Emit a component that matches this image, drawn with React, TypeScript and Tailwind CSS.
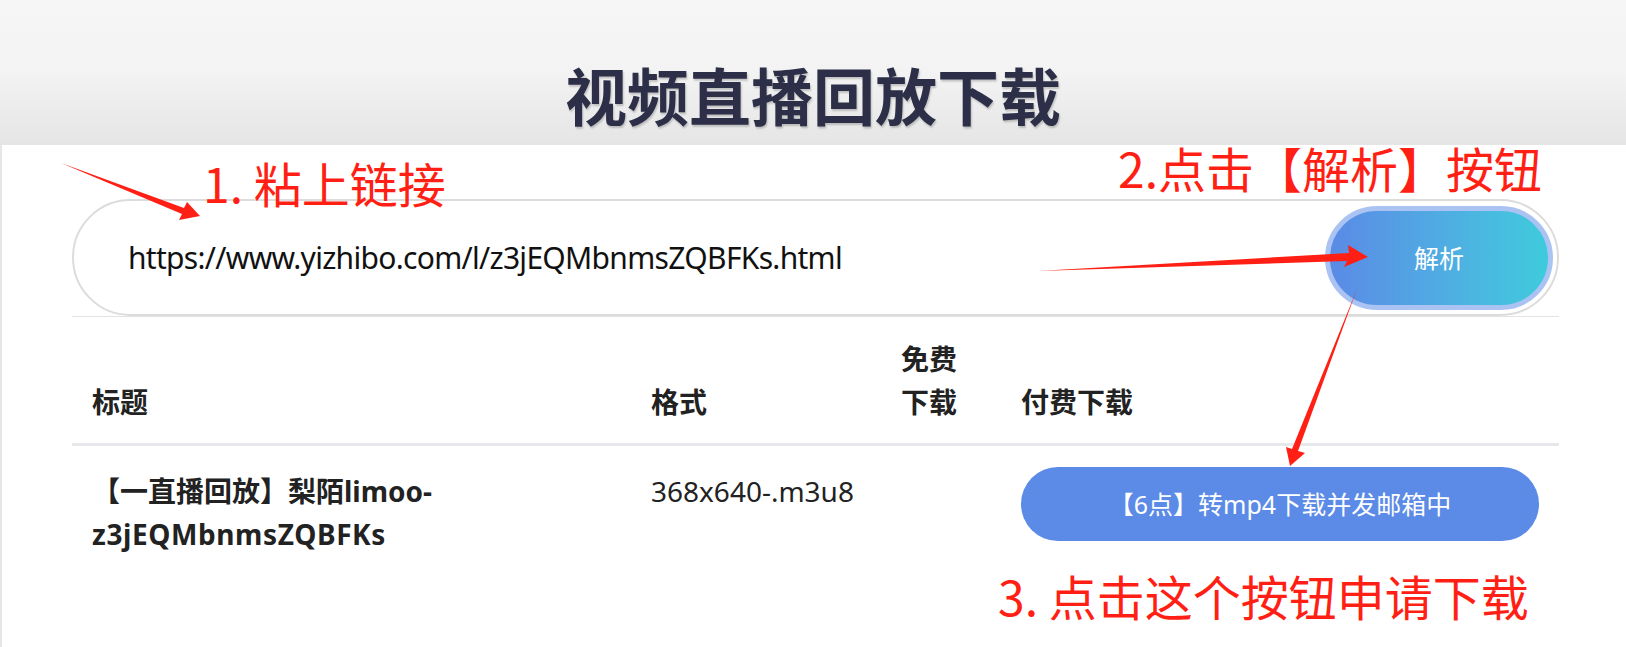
import React from "react";

export default function App() {
  return (
    <div className="relative w-full min-h-[647px] bg-white overflow-hidden font-['Noto_Sans','Noto_Sans_CJK_SC',sans-serif] text-[#222]">
      <header className="h-[145px] bg-gradient-to-b from-[#f6f6f6] via-[#f3f3f3] to-[#e5e5e5] flex justify-center pt-[63px]">
        <h1 className="text-[62px] leading-none font-bold text-[#2c2f47] font-['Noto_Sans_CJK_SC',sans-serif] [text-shadow:1px_2px_2px_rgba(0,0,0,0.2)]">
          视频直播回放下载
        </h1>
      </header>

      <main className="border-l-2 border-[#e6e6e6] pl-[70px] pr-[67px] pt-[54px] pb-10 min-h-[502px]">
        <div className="h-[117px] rounded-full border-2 border-[#dcdcdc] flex items-center pl-[54px] pr-[4px] py-[4px]">
          <div className="flex-1 text-[30px] tracking-[-0.7px] text-[#111] leading-none">
            https://www.yizhibo.com/l/z3jEQMbnmsZQBFKs.html
          </div>
          <button className="h-[104px] w-[228px] rounded-full border-[5px] border-[#abc3f2] bg-gradient-to-r from-[#5a8ae6] to-[#3ecbdc] text-white text-[25px] font-['Noto_Sans_CJK_SC',sans-serif]">
            解析
          </button>
        </div>

        <div className="border-t border-[#e3e3e3]">
          <div className="grid grid-cols-[559px_250px_120px_558px] border-b-[3px] border-[#e6e8ec] text-[28px] leading-[43px] font-bold">
            <div className="px-5 pt-[21px] pb-[19px] self-end">标题</div>
            <div className="px-5 pt-[21px] pb-[19px] self-end">格式</div>
            <div className="px-5 pt-[21px] pb-[19px] self-end">免费下载</div>
            <div className="px-5 pt-[21px] pb-[19px] self-end">付费下载</div>
          </div>
          <div className="grid grid-cols-[559px_250px_120px_558px] items-start text-[28px] leading-[43px]">
            <div className="px-5 pt-[24px] font-bold">
              【一直播回放】梨陌limoo-
              <br />
              <span className="tracking-[0.6px]">z3jEQMbnmsZQBFKs</span>
            </div>
            <div className="px-5 pt-[24px]">368x640-.m3u8</div>
            <div className="px-5 pt-[24px]"></div>
            <div className="px-5 pt-[21px]">
              <button className="w-full h-[74px] rounded-full bg-[#5b8be6] text-white text-[25px] leading-none">
                【6点】转mp4下载并发邮箱中
              </button>
            </div>
          </div>
        </div>
      </main>

      <svg
        className="absolute left-0 top-0 pointer-events-none"
        width="1626"
        height="647"
        viewBox="0 0 1626 647"
      >
        <polygon fill="#ff1f14" points="61,163 184,208 187,202 200,216 179,220 182,214" />
        <polygon fill="#ff1f14" points="1038,271 1349,253 1348,245 1368,257 1344,267 1347,261" />
        <polygon fill="#ff1f14" points="1357,289 1298,451 1305,453 1290,466 1286,447 1292,449" />
      </svg>

      <div className="absolute left-[203px] top-[158px] text-[48px] leading-none text-[#ff1f14] font-['Noto_Sans_CJK_SC',sans-serif] whitespace-nowrap">
        1. 粘上链接
      </div>
      <div className="absolute left-[1118px] top-[143px] text-[48px] leading-none text-[#ff1f14] font-['Noto_Sans_CJK_SC',sans-serif] whitespace-nowrap">
        2.点击【解析】按钮
      </div>
      <div className="absolute left-[998px] top-[571px] text-[48px] leading-none text-[#ff1f14] font-['Noto_Sans_CJK_SC',sans-serif] whitespace-nowrap">
        3. 点击这个按钮申请下载
      </div>
    </div>
  );
}
